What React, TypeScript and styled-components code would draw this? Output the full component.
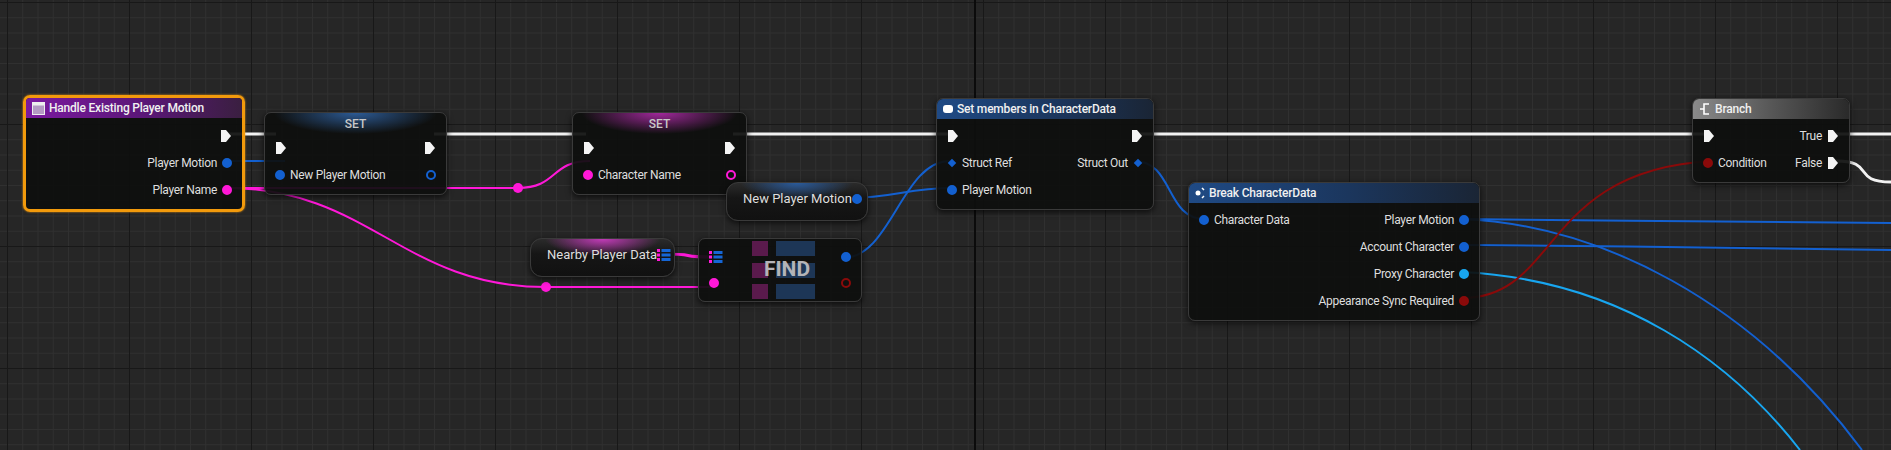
import React from "react";
import styled, { createGlobalStyle, css } from "styled-components";

const Global = createGlobalStyle`
  body { margin: 0; background: #262626; overflow: hidden; }
`;

const Canvas = styled.div`
  position: relative;
  width: 1891px;
  height: 450px;
  overflow: hidden;
  font-family: Roboto, "Liberation Sans", sans-serif;
  background-color: #262626;
  background-image:
    linear-gradient(90deg, transparent 974px, #0b0b0b 974px, #0b0b0b 976px, transparent 976px),
    linear-gradient(90deg, #181818 1px, transparent 1px),
    linear-gradient(#181818 1px, transparent 1px),
    linear-gradient(90deg, #303030 1px, transparent 1px),
    linear-gradient(#303030 1px, transparent 1px);
  background-size: 1891px 450px, 122px 122px, 122px 122px, 15.25px 15.25px, 15.25px 15.25px;
  background-position: 0 0, 7px 0, 0 2px, 7px 0, 0 2px;
`;

const Wires = styled.svg`
  position: absolute;
  inset: 0;
  pointer-events: none;
`;

const Node = styled.div<{ $x: number; $y: number; $w: number; $selected?: boolean }>`
  position: absolute;
  left: ${p => p.$x}px;
  top: ${p => p.$y}px;
  width: ${p => p.$w}px;
  box-sizing: border-box;
  background: rgba(14, 15, 14, 0.93);
  border-radius: 7px;
  box-shadow: 0 2px 6px rgba(0, 0, 0, 0.7);
  border: 1px solid #3a3a3a;
  overflow: hidden;
  ${p => p.$selected && css`
    border: 3px solid #f29a0c;
    box-shadow: 0 0 2px #f29a0c;
  `}
`;

const headerColors: Record<string, string> = {
  purple: "linear-gradient(90deg, #7b1aa0 0%, #5a1677 55%, #3a1f40 100%)",
  blue: "linear-gradient(90deg, #1f4a85 0%, #1b365d 55%, #1a2535 100%)",
  grey: "linear-gradient(90deg, #8a8a8a 0%, #575757 50%, #2a2a2a 100%)",
};

const Header = styled.div<{ $color: string }>`
  height: 20px;
  display: flex;
  align-items: center;
  gap: 4px;
  padding: 0 6px;
  background: ${p => headerColors[p.$color]};
  color: #f0f0f0;
  font-size: 12px;
  font-weight: 500;
  letter-spacing: -0.2px;
`;

const SetTitle = styled.div<{ $tint: string }>`
  height: 21px;
  text-align: center;
  line-height: 22px;
  color: #c8c8c8;
  font-size: 12px;
  font-weight: 500;
  background: radial-gradient(ellipse 45% 100% at 50% 0%, ${p => p.$tint} 0%, transparent 100%);
`;

const Body = styled.div<{ $pt?: number }>`
  display: flex;
  flex-direction: column;
  padding: ${p => p.$pt ?? 5}px 10px 6px 10px;
`;

const Row = styled.div<{ $h?: number }>`
  height: ${p => p.$h ?? 27}px;
  display: flex;
  align-items: center;
  justify-content: space-between;
`;

const Side = styled.div<{ $indent?: number }>`
  display: flex;
  align-items: center;
  gap: 5px;
  margin-left: ${p => p.$indent ?? 0}px;
  color: #dedede;
  font-size: 12px;
  letter-spacing: -0.3px;
  white-space: nowrap;
`;

const Dot = styled.span<{ $c: string; $hollow?: boolean }>`
  width: 10px;
  height: 10px;
  border-radius: 50%;
  box-sizing: border-box;
  background: ${p => (p.$hollow ? "transparent" : p.$c)};
  border: 2px solid ${p => p.$c};
  flex: none;
`;

const Diamond = styled.span`
  width: 6px;
  height: 6px;
  background: #1360d0;
  transform: rotate(45deg);
  margin: 0 2px;
  flex: none;
`;

const Exec = () => (
  <svg width="12" height="14" viewBox="0 0 12 14">
    <path d="M1 1 H6 L11 7 L6 13 H1 Z" fill="#f4f4f4" />
  </svg>
);

const ArrayIcon = () => (
  <svg width="14" height="14" viewBox="0 0 14 14">
    {[1, 5.5, 10].map(y => (
      <g key={y}>
        <rect x="0" y={y} width="3" height="3" fill="#ff18d8" />
        <rect x="4.5" y={y} width="9" height="3" fill="#1566d6" />
      </g>
    ))}
  </svg>
);

const Pill = styled(Node)<{ $tint: string }>`
  border-radius: 12px;
  background:
    radial-gradient(ellipse 40% 45% at 50% 0%, ${p => p.$tint} 0%, transparent 100%),
    linear-gradient(#2b2b2b, #161616 40%, #111);
`;

const PillLabel = styled(Side)`
  font-size: 13px;
  letter-spacing: 0;
`;

const FindBody = styled.div`
  position: relative;
  height: 62px;
  display: flex;
  justify-content: center;
  gap: 8px;
  padding-left: 6px;
`;

const StripeCol = styled.div`
  display: flex;
  flex-direction: column;
  justify-content: space-between;
  padding: 2px 0;
`;

const Stripe = styled.div<{ $c: string; $w: number }>`
  width: ${p => p.$w}px;
  height: 15px;
  background: ${p => p.$c};
`;

const FindLabel = styled.div`
  position: absolute;
  left: 14px;
  right: 0;
  top: 18px;
  text-align: center;
  color: #b4b4b8;
  font-size: 21px;
  font-weight: 700;
`;

const FindPins = styled.div`
  position: absolute;
  inset: 0;
  padding: 5px 10px;
  display: flex;
  flex-direction: column;
`;

const wire = (x1: number, y1: number, x2: number, y2: number) => {
  const d = Math.max(40, Math.abs(x2 - x1) * 0.45);
  return `M${x1} ${y1} C${x1 + d} ${y1} ${x2 - d} ${y2} ${x2} ${y2}`;
};

const Knot = ({ x, y }: { x: number; y: number }) => (
  <ellipse cx={x} cy={y} rx="5" ry="5" fill="#ff18d8" />
);

const stripes = [0, 1, 2];

export default function App() {
  return (
    <>
      <Global />
      <Canvas>
        <Wires width="1891" height="450">
          <g stroke="#f2f2f2" strokeWidth="3" fill="none">
            <path d="M226 134 H276" />
            <path d="M434 134 H586" />
            <path d="M733 134 H952" />
            <path d="M1136 134 H1709" />
            <path d="M1836 134 H1891" />
            <path d={wire(1836, 161, 1891, 182)} />
          </g>
          <g fill="none" strokeWidth="2">
            <path d="M226 161 H285" stroke="#1360d0" />
            <path d={`M226 188 H518 ${wire(518, 188, 590, 161).slice(8)}`} stroke="#ff18d8" />
            <path d={`${wire(226, 188, 546, 287)} H715`} stroke="#ff18d8" />
            <path d={wire(662, 254, 714, 257)} stroke="#ff18d8" strokeWidth="3" />
            <path d={wire(848, 198, 953, 188)} stroke="#1360d0" />
            <path d={wire(843, 258, 950, 161)} stroke="#1360d0" />
            <path d={wire(1134, 161, 1205, 219)} stroke="#1360d0" />
            <path d="M1462 219 C1600 221 1800 222 1891 223" stroke="#1360d0" />
            <path d="M1462 219 C1600 225 1750 300 1862 450" stroke="#1360d0" />
            <path d="M1462 245 C1600 246 1800 248 1891 250" stroke="#1360d0" />
            <path d="M1462 272 C1620 280 1730 360 1800 450" stroke="#18a6f0" />
            <path d="M1462 298 C1560 298 1540 170 1712 161" stroke="#8a0a0a" />
          </g>
          <Knot x={518} y={188} />
          <Knot x={546} y={287} />
        </Wires>

        <Node $x={23} $y={95} $w={222} $selected>
          <Header $color="purple">
            <svg width="13" height="13" viewBox="0 0 13 13">
              <rect x="0.5" y="0.5" width="12" height="12" fill="#b49ac4" stroke="#eee" />
              <rect x="0.5" y="0.5" width="12" height="3" fill="#eee" />
            </svg>
            Handle Existing Player Motion
          </Header>
          <Body $pt={4}>
            <Row><span /><Side><Exec /></Side></Row>
            <Row><span /><Side>Player Motion<Dot $c="#1360d0" /></Side></Row>
            <Row><span /><Side>Player Name<Dot $c="#ff18d8" /></Side></Row>
          </Body>
        </Node>

        <Node $x={264} $y={112} $w={183}>
          <SetTitle $tint="#2c5a94">SET</SetTitle>
          <Body $pt={0}>
            <Row><Side><Exec /></Side><Side><Exec /></Side></Row>
            <Row><Side><Dot $c="#1360d0" />New Player Motion</Side><Side><Dot $c="#1360d0" $hollow /></Side></Row>
          </Body>
        </Node>

        <Node $x={572} $y={112} $w={175}>
          <SetTitle $tint="#a0289a">SET</SetTitle>
          <Body $pt={0}>
            <Row><Side><Exec /></Side><Side><Exec /></Side></Row>
            <Row><Side><Dot $c="#ff18d8" />Character Name</Side><Side><Dot $c="#ff18d8" $hollow /></Side></Row>
          </Body>
        </Node>

        <Pill $x={726} $y={182} $w={142} $tint="#2a5a9a">
          <Body $pt={0}>
            <Row $h={31}><PillLabel $indent={6}>New Player Motion</PillLabel><Side><Dot $c="#1360d0" /></Side></Row>
          </Body>
        </Pill>

        <Pill $x={530} $y={238} $w={145} $tint="#c23ab8">
          <Body $pt={0}>
            <Row $h={31}><PillLabel $indent={6}>Nearby Player Data</PillLabel><Side><ArrayIcon /></Side></Row>
          </Body>
        </Pill>

        <Node $x={698} $y={238} $w={164}>
          <FindBody>
            <StripeCol>{stripes.map(i => <Stripe key={i} $c="#5a1a4c" $w={16} />)}</StripeCol>
            <StripeCol>{stripes.map(i => <Stripe key={i} $c="#1d3656" $w={39} />)}</StripeCol>
            <FindLabel>FIND</FindLabel>
            <FindPins>
              <Row><Side><ArrayIcon /></Side><Side><Dot $c="#1360d0" /></Side></Row>
              <Row><Side><Dot $c="#ff18d8" /></Side><Side><Dot $c="#8a0a0a" $hollow /></Side></Row>
            </FindPins>
          </FindBody>
        </Node>

        <Node $x={936} $y={98} $w={218}>
          <Header $color="blue">
            <svg width="10" height="8"><rect width="10" height="8" rx="3" fill="#fff" /></svg>
            Set members in CharacterData
          </Header>
          <Body $pt={3}>
            <Row><Side><Exec /></Side><Side><Exec /></Side></Row>
            <Row><Side><Diamond />Struct Ref</Side><Side>Struct Out<Diamond /></Side></Row>
            <Row><Side><Dot $c="#1360d0" />Player Motion</Side><span /></Row>
          </Body>
        </Node>

        <Node $x={1188} $y={182} $w={292}>
          <Header $color="blue">
            <svg width="10" height="12" viewBox="0 0 10 12">
              <circle cx="3" cy="6" r="2.5" fill="#fff" />
              <path d="M7 1 L9 3 M7 11 L9 9" stroke="#fff" strokeWidth="1.5" />
            </svg>
            Break CharacterData
          </Header>
          <Body $pt={3}>
            <Row><Side><Dot $c="#1360d0" />Character Data</Side><Side>Player Motion<Dot $c="#1360d0" /></Side></Row>
            <Row><span /><Side>Account Character<Dot $c="#1360d0" /></Side></Row>
            <Row><span /><Side>Proxy Character<Dot $c="#18a6f0" /></Side></Row>
            <Row><span /><Side>Appearance Sync Required<Dot $c="#8a0a0a" /></Side></Row>
          </Body>
        </Node>

        <Node $x={1692} $y={98} $w={158}>
          <Header $color="grey">
            <svg width="12" height="14" viewBox="0 0 12 14" fill="none" stroke="#fff" strokeWidth="1.6">
              <path d="M10 2 H5 V12 H10 M1 7 H5" />
            </svg>
            Branch
          </Header>
          <Body $pt={3}>
            <Row><Side><Exec /></Side><Side>True<Exec /></Side></Row>
            <Row><Side><Dot $c="#8a0a0a" />Condition</Side><Side>False<Exec /></Side></Row>
          </Body>
        </Node>
      </Canvas>
    </>
  );
}
